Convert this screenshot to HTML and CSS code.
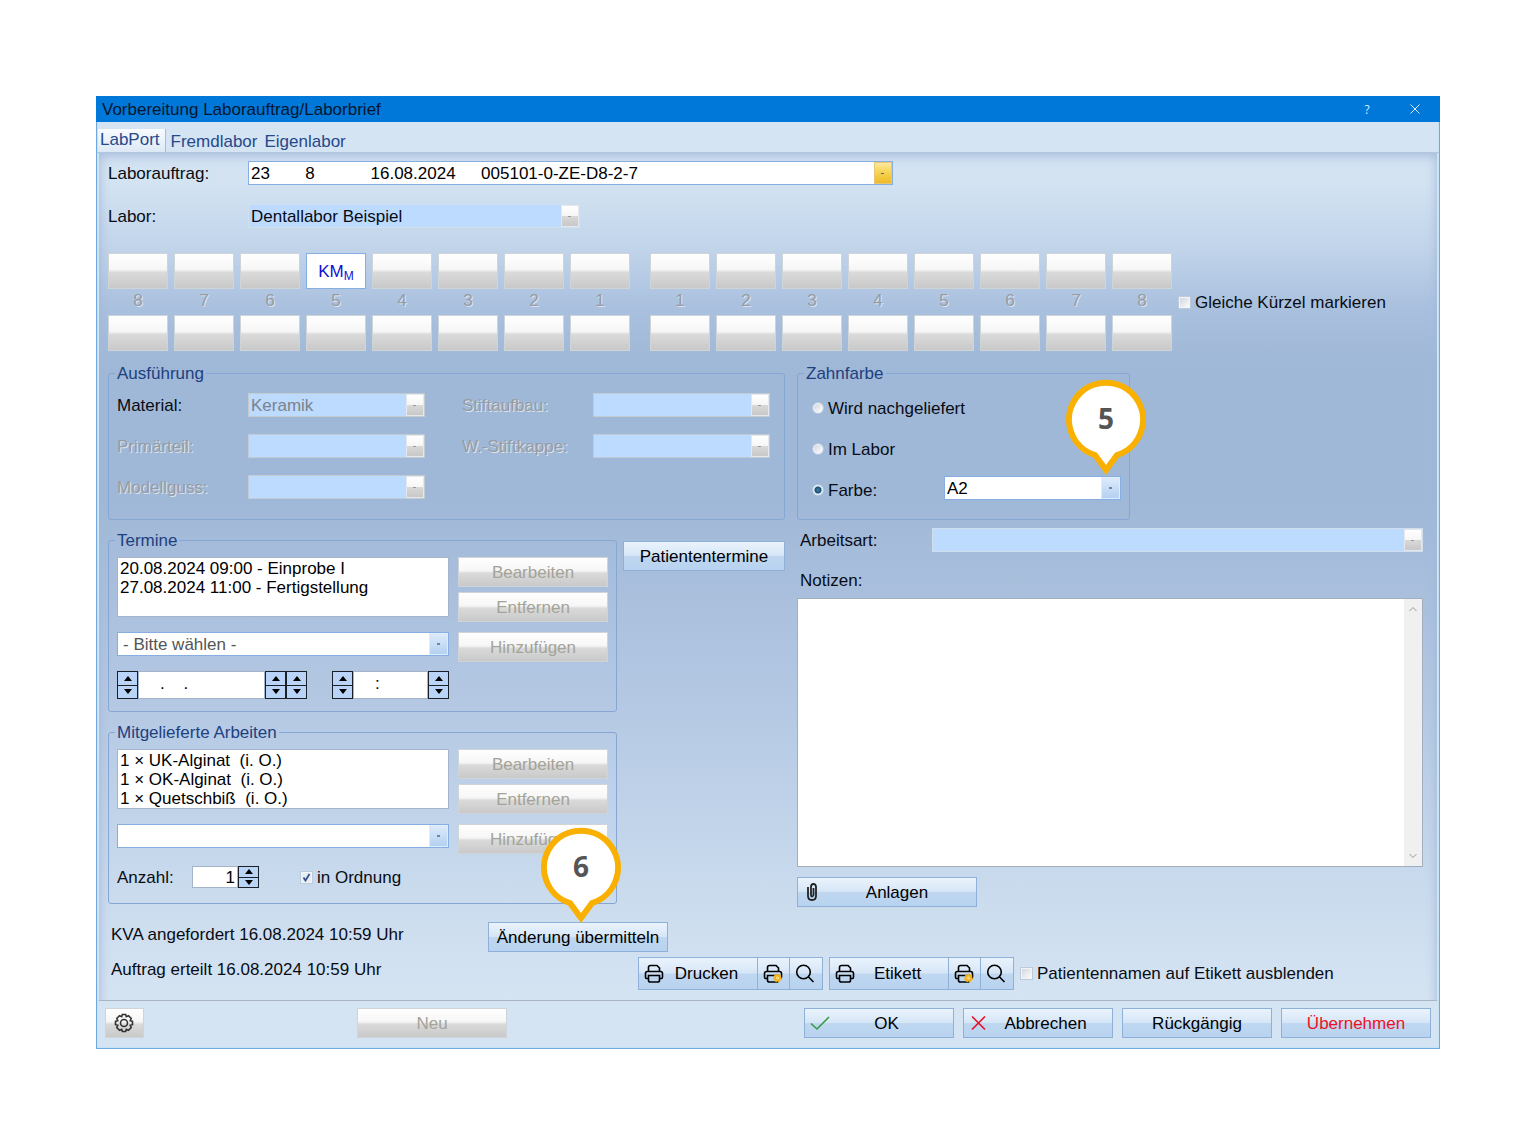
FILE: index.html
```
<!DOCTYPE html>
<html lang="de">

<head>
    <meta charset="utf-8">
    <title>Vorbereitung Laborauftrag/Laborbrief</title>
    <link rel="stylesheet" href="styles.css">
</head>

<body>
    <!-- shared icons -->
    <svg class="sprite" aria-hidden="true">
        <symbol id="printer" viewBox="0 0 20 20">
            <path d="M4.500 7V3.500Q4.500 1.500 6.500 1.500H13L15.500 4V7M4 14.500H2.500Q1.500 14.500 1.500 13V9.500Q1.500 7.500 3.500 7.500H16.500Q18.500 7.500 18.500 9.500V13Q18.500 14.500 17.500 14.500H16M4.500 11.500H15.500V16.500Q15.500 18 13.500 18H6.500Q4.500 18 4.500 16.500Z" />
        </symbol>
        <symbol id="lens" viewBox="0 0 20 20">
            <circle cx="8.500" cy="8" r="6.800" />
            <path d="M13.300 12.800L18.500 18" />
        </symbol>
        <symbol id="pin" viewBox="0 0 82 97">
            <path d="M30 76A37 37 0 1 1 52 76L41 91Z" />
        </symbol>
    </svg>

    <main class="dialog">
        <header class="titlebar">
            <h1>Vorbereitung Laborauftrag/Laborbrief</h1>
            <button type="button" class="win-btn" aria-label="Hilfe">?</button>
            <button type="button" class="win-btn" aria-label="Schließen">
                <svg width="10" height="10" viewBox="0 0 10 10"><path d="M.5 .5L9.500 9.500M9.500 .5L.5 9.500" /></svg>
            </button>
        </header>

        <nav class="tabs">
            <button type="button" class="tab active">LabPort</button>
            <button type="button" class="tab">Fremdlabor</button>
            <button type="button" class="tab">Eigenlabor</button>
        </nav>

        <div class="panel">
            <div class="order">
                <label for="auftrag">Laborauftrag:</label>
                <select id="auftrag" class="gold">
                    <option>23&emsp;&emsp;&hairsp;8&emsp;&emsp;&emsp;&nbsp;16.08.2024&emsp;&ensp;005101-0-ZE-D8-2-7</option>
                </select>
                <label for="labor">Labor:</label>
                <select id="labor" class="lab" disabled>
                    <option>Dentallabor Beispiel</option>
                </select>
            </div>

            <div class="teeth">
                <div class="jaw">
                    <button type="button" disabled></button>
                    <button type="button" disabled></button>
                    <button type="button" disabled></button>
                    <button type="button" class="marked">KM<sub>M</sub></button>
                    <button type="button" disabled></button>
                    <button type="button" disabled></button>
                    <button type="button" disabled></button>
                    <button type="button" disabled></button>
                    <span>8</span><span>7</span><span>6</span><span>5</span><span>4</span><span>3</span><span>2</span><span>1</span>
                    <button type="button" disabled></button>
                    <button type="button" disabled></button>
                    <button type="button" disabled></button>
                    <button type="button" disabled></button>
                    <button type="button" disabled></button>
                    <button type="button" disabled></button>
                    <button type="button" disabled></button>
                    <button type="button" disabled></button>
                </div>
                <div class="jaw">
                    <button type="button" disabled></button>
                    <button type="button" disabled></button>
                    <button type="button" disabled></button>
                    <button type="button" disabled></button>
                    <button type="button" disabled></button>
                    <button type="button" disabled></button>
                    <button type="button" disabled></button>
                    <button type="button" disabled></button>
                    <span>1</span><span>2</span><span>3</span><span>4</span><span>5</span><span>6</span><span>7</span><span>8</span>
                    <button type="button" disabled></button>
                    <button type="button" disabled></button>
                    <button type="button" disabled></button>
                    <button type="button" disabled></button>
                    <button type="button" disabled></button>
                    <button type="button" disabled></button>
                    <button type="button" disabled></button>
                    <button type="button" disabled></button>
                </div>
                <label class="check"><input type="checkbox">Gleiche Kürzel markieren</label>
            </div>

            <div class="columns">
                <div class="left">
                    <fieldset class="execution">
                        <legend>Ausführung</legend>
                        <label for="material">Material:</label>
                        <select id="material" disabled>
                            <option>Keramik</option>
                        </select>
                        <label for="stift" class="off">Stiftaufbau:</label>
                        <select id="stift" disabled></select>
                        <label for="primaer" class="off">Primärteil:</label>
                        <select id="primaer" disabled></select>
                        <label for="kappe" class="off">W.-Stiftkappe:</label>
                        <select id="kappe" disabled></select>
                        <label for="guss" class="off">Modellguss:</label>
                        <select id="guss" disabled></select>
                    </fieldset>

                    <div class="lower">
                        <div class="groups">
                            <fieldset class="group">
                                <legend>Termine</legend>
                                <div class="fields">
                                    <select size="3" class="list" aria-label="Termine">
                                        <option>20.08.2024 09:00 - Einprobe I</option>
                                        <option>27.08.2024 11:00 - Fertigstellung</option>
                                    </select>
                                    <select class="hint" aria-label="Terminart">
                                        <option>- Bitte wählen -</option>
                                    </select>
                                    <div class="spinners">
                                        <div class="spinner date">
                                            <span class="spin"><button type="button" aria-label="Tag vor"></button><button type="button" aria-label="Tag zurück"></button></span>
                                            <input type="text" aria-label="Datum" value="&nbsp;&nbsp;&nbsp;&nbsp;.&nbsp;&nbsp;&nbsp;&nbsp;.">
                                            <span class="spin"><button type="button" aria-label="Monat vor"></button><button type="button" aria-label="Monat zurück"></button></span>
                                            <span class="spin"><button type="button" aria-label="Jahr vor"></button><button type="button" aria-label="Jahr zurück"></button></span>
                                        </div>
                                        <div class="spinner time">
                                            <span class="spin"><button type="button" aria-label="Stunde vor"></button><button type="button" aria-label="Stunde zurück"></button></span>
                                            <input type="text" aria-label="Uhrzeit" value="&nbsp;&nbsp;&nbsp;&nbsp;:">
                                            <span class="spin"><button type="button" aria-label="Minute vor"></button><button type="button" aria-label="Minute zurück"></button></span>
                                        </div>
                                    </div>
                                </div>
                                <div class="actions">
                                    <button type="button" class="btn" disabled>Bearbeiten</button>
                                    <button type="button" class="btn" disabled>Entfernen</button>
                                    <button type="button" class="btn add" disabled>Hinzufügen</button>
                                </div>
                            </fieldset>

                            <fieldset class="group">
                                <legend>Mitgelieferte Arbeiten</legend>
                                <div class="fields">
                                    <select size="3" class="list" aria-label="Mitgelieferte Arbeiten">
                                        <option>1 × UK-Alginat&nbsp; (i. O.)</option>
                                        <option>1 × OK-Alginat&nbsp; (i. O.)</option>
                                        <option>1 × Quetschbiß&nbsp; (i. O.)</option>
                                    </select>
                                    <select aria-label="Arbeit"></select>
                                    <div class="amount">
                                        <label for="anzahl">Anzahl:</label>
                                        <div class="spinner count">
                                            <input type="text" id="anzahl" value="1">
                                            <span class="spin"><button type="button" aria-label="Mehr"></button><button type="button" aria-label="Weniger"></button></span>
                                        </div>
                                        <label class="check"><input type="checkbox" checked>in Ordnung</label>
                                    </div>
                                </div>
                                <div class="actions">
                                    <button type="button" class="btn" disabled>Bearbeiten</button>
                                    <button type="button" class="btn" disabled>Entfernen</button>
                                    <button type="button" class="btn add" disabled>Hinzufügen</button>
                                </div>
                            </fieldset>
                        </div>
                        <button type="button" class="btn dates">Patiententermine</button>
                    </div>
                </div>

                <div class="right">
                    <fieldset class="color">
                        <legend>Zahnfarbe</legend>
                        <label class="check"><input type="radio" name="farbe">Wird nachgeliefert</label>
                        <label class="check"><input type="radio" name="farbe">Im Labor</label>
                        <div class="color-row">
                            <label class="check"><input type="radio" name="farbe" checked>Farbe:</label>
                            <div class="anchor">
                                <select aria-label="Farbe">
                                    <option>A2</option>
                                </select>
                                <div class="callout callout-color"><svg><use href="#pin" /></svg><b>5</b></div>
                            </div>
                        </div>
                    </fieldset>
                    <div class="kind">
                        <label for="art">Arbeitsart:</label>
                        <select id="art" class="lab" disabled></select>
                    </div>
                    <label for="notizen" class="notes-label">Notizen:</label>
                    <div class="notes">
                        <textarea id="notizen"></textarea>
                        <div class="scroll">
                            <svg width="8" height="6" viewBox="0 0 8 6"><path d="M.5 5L4 1.500L7.500 5" /></svg>
                            <svg width="8" height="6" viewBox="0 0 8 6"><path d="M.5 1L4 4.500L7.500 1" /></svg>
                        </div>
                    </div>
                    <button type="button" class="btn with-icon attach">
                        <svg class="clip" width="12" height="20" viewBox="0 0 12 20"><path d="M2 5V14Q2 18 6 18T10 14V5Q10 2 7.500 2T5 5V13Q5 14.500 6 14.500T7.500 13V6" /></svg>
                        <span>Anlagen</span>
                    </button>
                </div>
            </div>

            <div class="status">
                <p class="first">KVA angefordert 16.08.2024 10:59 Uhr</p>
                <div class="anchor">
                    <button type="button" class="btn submit">Änderung übermitteln</button>
                    <div class="callout callout-submit"><svg><use href="#pin" /></svg><b>6</b></div>
                </div>
            </div>
            <div class="status">
                <p class="second">Auftrag erteilt 16.08.2024 10:59 Uhr</p>
                <div class="toolbar">
                    <button type="button" class="btn with-icon">
                        <svg class="icon"><use href="#printer" /></svg><span>Drucken</span>
                    </button>
                    <button type="button" class="btn small" aria-label="Drucker einrichten">
                        <svg class="icon"><use href="#printer" /><circle class="cog" cx="14.500" cy="14" r="3.500" /><circle class="hole" cx="14.500" cy="14" r="1" /></svg>
                    </button>
                    <button type="button" class="btn small" aria-label="Vorschau"><svg class="icon"><use href="#lens" /></svg></button>
                </div>
                <div class="toolbar">
                    <button type="button" class="btn with-icon">
                        <svg class="icon"><use href="#printer" /></svg><span>Etikett</span>
                    </button>
                    <button type="button" class="btn small" aria-label="Etikettendrucker einrichten">
                        <svg class="icon"><use href="#printer" /><circle class="cog" cx="14.500" cy="14" r="3.500" /><circle class="hole" cx="14.500" cy="14" r="1" /></svg>
                    </button>
                    <button type="button" class="btn small" aria-label="Etikettvorschau"><svg class="icon"><use href="#lens" /></svg></button>
                </div>
                <label class="check"><input type="checkbox">Patientennamen auf Etikett ausblenden</label>
            </div>
        </div>

        <footer class="footer">
            <button type="button" class="btn gear" aria-label="Einstellungen">
                <svg class="icon" viewBox="0 0 20 20"><path d="M8.300 1.500H11.700L12.300 3.700L14.500 2.800L17.200 5.500L16.200 7.700L18.500 8.300V11.700L16.200 12.300L17.200 14.500L14.500 17.200L12.300 16.300L11.700 18.500H8.300L7.700 16.300L5.500 17.200L2.800 14.500L3.800 12.300L1.500 11.700V8.300L3.800 7.700L2.800 5.500L5.500 2.800L7.700 3.700Z" /><circle cx="10" cy="10" r="3.500" /></svg>
            </button>
            <button type="button" class="btn new" disabled>Neu</button>
            <div class="decide">
                <button type="button" class="btn with-icon">
                    <svg class="icon ok" viewBox="0 0 20 20"><path d="M1 10.500L7 16L19 4" /></svg><span>OK</span>
                </button>
                <button type="button" class="btn with-icon">
                    <svg class="icon cancel" viewBox="0 0 20 20"><path d="M3 3.500L16 16.500M16 3.500L3 16.500" /></svg><span>Abbrechen</span>
                </button>
                <button type="button" class="btn">Rückgängig</button>
                <button type="button" class="btn apply">Übernehmen</button>
            </div>
        </footer>
    </main>
</body>

</html>
```
FILE: styles.css
```
* {
    box-sizing: border-box;
}

body {
    margin: 0;
    padding: 96px;
    background: #fff;
    color: #080c14;
    font-family: "Liberation Sans", Arial, sans-serif;
    font-size: 17px;
    line-height: 19px;
}

button,
input,
select,
textarea {
    font: inherit;
    color: inherit;
    margin: 0;
    border-radius: 0;
}

svg {
    fill: none;
    stroke: currentColor;
}

.sprite {
    position: absolute;
    width: 0;
    height: 0;
}

.dialog {
    background: #d5e4f3;
    border: 1px solid #6fa9df;
    border-top: 0;
    box-shadow: inset 0 0 0 1px #c5e3f5;
}

/* title bar */
.titlebar {
    display: flex;
    align-items: center;
    height: 26px;
    margin: 0 -1px;
    padding: 0 1px 0 6px;
    background: #0078d9;
}

.titlebar h1 {
    flex: 1;
    margin: 0;
    font-size: 17px;
    font-weight: normal;
    color: #04162e;
}

.win-btn {
    width: 48px;
    padding: 0;
    border: 0;
    background: none;
    color: #d8ecff;
    font-family: "Open Sans", sans-serif;
    font-size: 12px;
}

/* tabs */
.tabs {
    display: flex;
    align-items: flex-end;
    gap: 3px;
    padding: 7px 1px 0;
    border-bottom: 1px solid #b0c6e2;
}

.tab {
    padding: 2px 2px 1px;
    border: 0;
    background: none;
    color: #26498a;
}

.tab.active {
    height: 23px;
    padding: 0 5px 3px 2px;
    border-right: 1px solid #a5bdda;
    background: linear-gradient(#f8fbfe, #dce9f6);
}

.panel {
    margin: 0 2px;
    padding: 8px 14px 10px 9px;
    border-bottom: 1px solid #aab4c3;
    background: linear-gradient(#d3e3f2 0, #d3e3f2 30px, #c1d4ea 95px, #a9c0de 155px, #a0b8d7 210px, #a0b8d7 350px, #b5c9e4 560px, #cbdcee 750px, #d5e4f3 100%);
    box-shadow: inset 0 12px 12px -10px #a3b8d8, inset 12px 0 12px -12px #a3b8d8, inset -12px 0 12px -12px #a3b8d8;
}

/* drop-downs */
select {
    display: block;
    width: 100%;
    height: 24px;
    padding: 0 20px 0 2px;
    border: 1px solid #86aee0;
    appearance: none;
    color: #000;
    background:
        linear-gradient(#6f86a8, #6f86a8) right 8px center / 3px 2px no-repeat,
        linear-gradient(#dceafa, #c8def6 50%, #b4d0f2) right 1px top 1px / 17px 20px no-repeat,
        linear-gradient(#dfecfb, #dfecfb) right / 19px 100% no-repeat,
        #fff;
}

select:disabled {
    border-color: #c3cbd2;
    color: #7c828a;
    opacity: 1;
    background:
        linear-gradient(#999, #999) right 8px center / 3px 1px no-repeat,
        linear-gradient(#fff, #f6f6f6 48%, #d8d8d8 52%, #c8c8c8) right 1px top 1px / 16px 20px no-repeat,
        linear-gradient(#e4e8ec, #e4e8ec) right / 18px 100% no-repeat,
        #bddaff;
}

select.lab:disabled {
    border-color: #cfdfee;
    color: #080c14;
}

select.gold {
    background:
        linear-gradient(#5b6a86, #5b6a86) right 8px center / 3px 1px no-repeat,
        linear-gradient(#fbe8a0, #f6d24e 50%, #eebb28) right 1px top 1px / 16px 20px no-repeat,
        linear-gradient(#e8c878, #e8c878) right / 18px 100% no-repeat,
        #fff;
}

select.hint {
    padding-left: 5px;
    color: #555;
}

select.list {
    height: 60px;
    padding: 1px 0 0;
    border-color: #a3b4cb;
    background: #fff;
    overflow: hidden;
}

.list option {
    height: 19px;
    min-height: 19px;
    padding: 0 2px;
    line-height: 19px;
}

.order {
    display: grid;
    grid-template-columns: 140px minmax(0, 645px);
    row-gap: 19px;
    align-items: center;
}

#labor {
    width: 332px;
}

/* buttons */
.btn {
    height: 30px;
    padding: 0 4px;
    border: 1px solid #8fb0d8;
    color: #000;
    background: linear-gradient(#eaf3fc, #d6e6f7 48%, #bfd7f0 52%, #b8d3f0);
    white-space: nowrap;
}

.btn:disabled,
.jaw button,
.gear {
    border: 1px solid #cfd4d8;
    color: #a3a398;
    background: linear-gradient(#fff, #f6f6f6 46%, #dadada 54%, #c9c9c9);
}

.with-icon {
    display: flex;
    align-items: center;
    padding: 0 0 0 6px;
}

.with-icon span {
    flex: 1;
    text-align: center;
}

.icon {
    display: block;
    width: 20px;
    height: 20px;
    stroke-width: 1.6;
}

/* teeth */
.teeth {
    display: flex;
    align-items: center;
    margin: 25px 0 13px;
}

.jaw {
    display: grid;
    flex: 0 1 522px;
    grid-template-columns: repeat(8, 1fr);
    grid-template-rows: 36px 26px 36px;
    column-gap: 6px;
    margin-right: 20px;
}

.jaw + .jaw {
    margin-right: 6px;
}

.jaw button {
    min-width: 0;
    padding: 0;
}

.jaw .marked {
    border-color: #86aee0;
    background: #fff;
    color: #1010d8;
}

.marked sub {
    font-size: 12px;
    line-height: 0;
    vertical-align: -3px;
}

.jaw span {
    line-height: 23px;
    text-align: center;
}

.jaw span,
.off {
    color: #969ca5;
    text-shadow: 1px 1px 0 #dbe4ee;
}

/* check boxes and radios */
.check {
    display: flex;
    align-items: center;
    gap: 4px;
    white-space: nowrap;
}

.check input {
    flex: none;
    width: 13px;
    height: 13px;
    border: 1px solid #bccbdc;
    appearance: none;
    background: linear-gradient(135deg, #cdd3da, #fff);
    box-shadow: inset 0 0 0 1px #f2f5f8;
}

.check input[type="radio"] {
    width: 12px;
    height: 12px;
    border-color: #b5cae3;
    border-radius: 50%;
}

.check input[type="radio"]:checked {
    background: radial-gradient(circle, #3c8aa8 0, #1d4a70 3px, #e6f0f8 4px);
    box-shadow: none;
}

.check input[type="checkbox"]:checked {
    background: url("data:image/svg+xml,%3Csvg xmlns='http://www.w3.org/2000/svg' viewBox='0 0 11 11'%3E%3Cpath d='M2.500 5.500L4.500 8.500L8.500 2' fill='none' stroke='%233c5488' stroke-width='1.800'/%3E%3C/svg%3E") center / 11px #e6eef6;
}

/* groups */
.columns {
    display: grid;
    grid-template-columns: minmax(0, 677fr) minmax(0, 626fr);
    gap: 12px;
}

fieldset {
    min-width: 0;
    margin: 0;
    padding: 0 8px;
    border: 1px solid #86a6d3;
    border-radius: 3px;
}

legend {
    margin-left: -2px;
    padding: 0 2px;
    color: #1d4080;
}

.execution {
    display: grid;
    grid-template-columns: 131px minmax(0, 1fr) 37px 131px minmax(0, 1fr);
    row-gap: 17px;
    align-items: center;
    padding: 10px 14px 20px 8px;
}

.execution label:nth-of-type(even) {
    grid-column: 4;
}

.left,
.right {
    display: flex;
    flex-direction: column;
}

/* attachment button reaches slightly below the left groups */
.right {
    margin-bottom: -3px;
}

.lower {
    display: flex;
    align-items: flex-start;
    gap: 6px;
    margin-top: 11px;
}

.groups {
    display: flex;
    flex: 1;
    flex-direction: column;
    gap: 11px;
    min-width: 0;
}

.group {
    display: grid;
    grid-template-columns: minmax(0, 1fr) 150px;
    column-gap: 9px;
    padding: 7px 8px 12px;
}

.fields {
    display: flex;
    flex-direction: column;
    gap: 15px;
}

.actions {
    display: flex;
    flex-direction: column;
    gap: 5px;
}

.add {
    margin-top: 5px;
}

.dates {
    width: 162px;
    margin-top: 10px;
}

.spinners {
    display: flex;
    justify-content: space-between;
}

.spinner {
    display: flex;
    height: 28px;
}

.spinner input {
    flex: 1;
    width: 0;
    min-width: 0;
    padding: 0 2px 3px;
    border: 1px solid #a3b4cb;
    background: #fff;
    color: #000;
}

.date {
    width: 190px;
}

.time {
    width: 117px;
}

.count {
    width: 67px;
    height: 22px;
    margin-right: 41px;
}

.count input {
    padding-bottom: 0;
    text-align: right;
}

.spin {
    display: flex;
    flex-direction: column;
    width: 21px;
}

.spin button {
    flex: 1;
    min-height: 0;
    padding: 0;
    border: 1px solid #1a2028;
    background: #b9d4f7;
    line-height: 0;
}

.spin button + button {
    border-top: 0;
}

.spin button::before {
    content: "";
    display: block;
    width: 0;
    margin: 0 auto;
    border: 4px solid transparent;
    border-top: 0;
    border-bottom: 5px solid #000;
}

.spin button + button::before {
    border-top: 5px solid #000;
    border-bottom: 0;
}

.amount {
    display: flex;
    align-items: center;
    height: 28px;
}

.amount > label:first-child {
    width: 75px;
}

/* right column */
.color {
    display: flex;
    flex-direction: column;
    gap: 13px;
    width: 333px;
    padding: 11px 8px 15px 14px;
}

.color legend {
    margin-left: -8px;
}

.color .check {
    height: 28px;
}

.color-row {
    display: flex;
    align-items: flex-start;
    justify-content: space-between;
}

.anchor {
    position: relative;
}

.color .anchor {
    width: 177px;
}

.kind {
    display: grid;
    grid-template-columns: 132px minmax(0, 1fr);
    align-items: center;
    margin-top: 8px;
    padding-left: 3px;
}

.notes-label {
    margin: 19px 3px 8px;
}

.notes {
    display: flex;
    flex: 1;
    min-height: 120px;
    border: 1px solid #a3aebd;
    background: #fff;
}

.notes textarea {
    flex: 1;
    padding: 2px;
    border: 0;
    resize: none;
}

.scroll {
    display: flex;
    flex-direction: column;
    align-items: center;
    justify-content: space-between;
    width: 18px;
    padding: 7px 0;
    background: #f0f0f0;
    color: #999;
}

.attach {
    width: 180px;
    margin-top: 10px;
    padding-left: 8px;
}

.clip {
    color: #222;
    stroke-width: 1.8;
}

/* status lines and print tools */
.status {
    display: flex;
    align-items: flex-start;
    margin-top: 5px;
}

.columns + .status {
    margin-top: 18px;
}

.status p {
    flex: none;
    margin: 0;
    padding-left: 3px;
    line-height: 25px;
}

.status .first {
    width: 380px;
}

.status .second {
    width: 530px;
}

.submit {
    width: 180px;
}

.toolbar {
    display: flex;
    margin-right: 6px;
}

.toolbar .btn {
    height: 33px;
}

.toolbar .with-icon {
    width: 120px;
    padding: 0 8px 0 5px;
}

.toolbar .small {
    width: 32px;
    padding: 0 5px;
    border-left: 0;
}

.toolbar .small:last-child {
    width: 33px;
}

.cog {
    fill: #f5b21c;
    stroke: #f5b21c;
    stroke-dasharray: 2 1;
}

.hole {
    fill: #d9a030;
    stroke: #fff0b8;
    stroke-width: 1;
}

.status .check {
    height: 33px;
}

/* numbered markers */
.callout {
    position: absolute;
    bottom: 100%;
    width: 82px;
    height: 97px;
    pointer-events: none;
}

.callout svg {
    display: block;
    width: 82px;
    height: 97px;
    fill: #fff;
    stroke: #f9b000;
    stroke-width: 6;
}

.callout b {
    position: absolute;
    top: 0;
    left: 0;
    width: 82px;
    color: #555;
    font-family: "Open Sans", sans-serif;
    font-size: 28px;
    font-weight: bold;
    line-height: 78px;
    text-align: center;
}

.callout-color {
    right: -26px;
}

.callout-submit {
    bottom: calc(100% - 2px);
    left: 52px;
}

/* footer */
.footer {
    display: flex;
    align-items: center;
    padding: 7px 8px 10px;
}

.gear {
    width: 39px;
    padding: 0 8px;
    color: #333;
}

.new {
    width: 150px;
    margin-left: 213px;
}

.decide {
    display: flex;
    gap: 9px;
    margin-left: auto;
}

.decide .btn {
    width: 150px;
}

.decide .with-icon {
    padding: 0 10px 0 5px;
}

.ok {
    color: #379a47;
}

.cancel {
    color: #e81123;
}

.btn.apply {
    color: #f00f1e;
}
```
